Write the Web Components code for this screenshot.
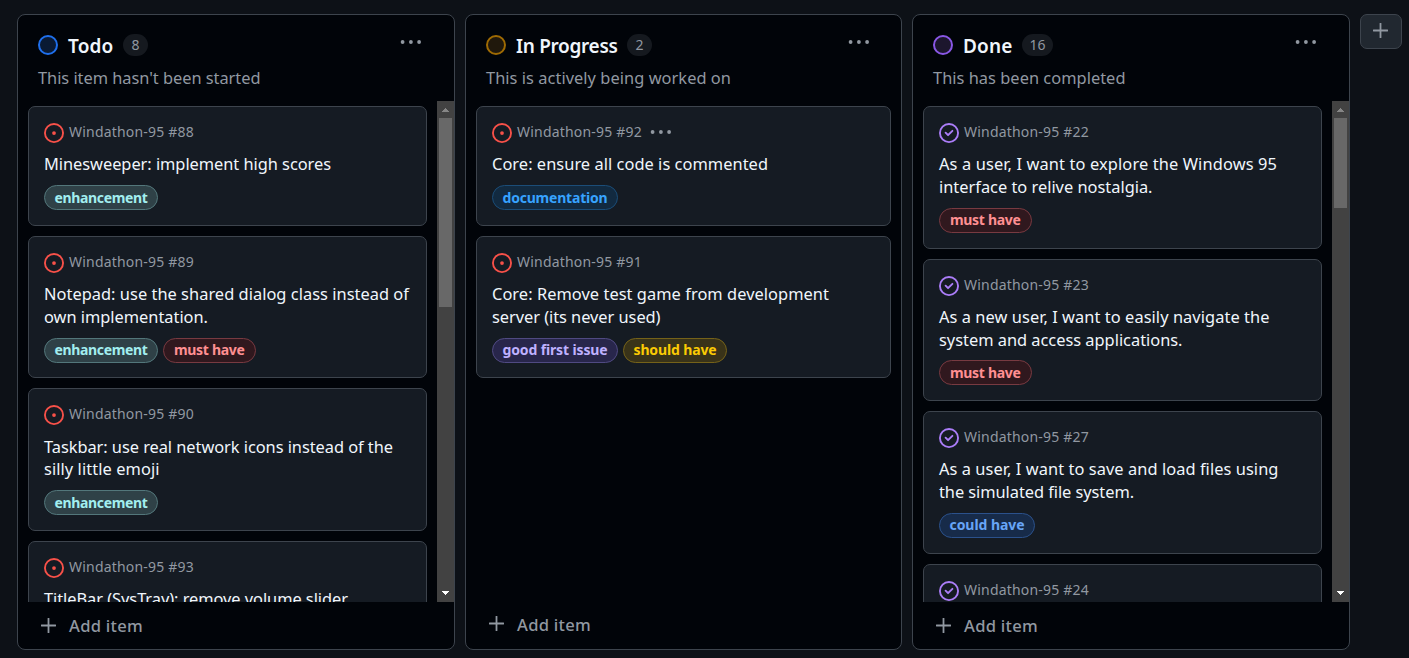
<!DOCTYPE html>
<html lang="en"><head><meta charset="utf-8"><title>Board</title>
<style>html,body{margin:0;height:100%;background:#0d1117;overflow:hidden}</style></head>
<body>
<project-board></project-board>
<script>
const S = 'font-family:"Noto Sans","Open Sans",sans-serif;';
const define = (name, css, html, after) => customElements.define(name, class extends HTMLElement {
  connectedCallback() {
    if (this.shadowRoot) return;
    const r = this.attachShadow({mode: 'open'});
    r.innerHTML = '<style>*{box-sizing:border-box}' + css + '</style>' + (typeof html === 'function' ? html(this) : html);
    if (after) after(this, r);
  }
});

// A single line of text, tracked to occupy the advance given by w.
define('fit-text', ':host{display:block;white-space:pre;width:max-content}span{display:inline-block}', '<span><slot></slot></span>', (el, r) => {
  const w = +el.getAttribute('w');
  const span = r.querySelector('span');
  const now = span.getBoundingClientRect().width, n = el.textContent.length;
  if (w && now) span.style.letterSpacing = ((w - now) / n).toFixed(4) + 'px';
});

define('kebab-dots', ':host{display:block;width:22px;height:4px}svg{display:block}',
  '<svg width="22" height="4"><g fill="#9198a1"><circle cx="2.6" cy="2" r="1.9"/><circle cx="10.9" cy="2" r="1.9"/><circle cx="19.1" cy="2" r="1.9"/></g></svg>');

define('plus-icon', ':host{display:block;width:15px;height:15px}svg{display:block}',
  '<svg width="15" height="15"><path d="M7.5 .5v14M.5 7.5h14" stroke="#9198a1" stroke-width="1.8" stroke-linecap="round"/></svg>');

define('issue-icon', ':host{display:block;width:20px;height:20px}svg{display:block}', el => el.hasAttribute('done')
  ? '<svg width="20" height="20" viewBox="0 0 16 16" fill="#ab7df8"><path d="M11.28 6.78a.75.75 0 0 0-1.06-1.06L7.25 8.69 5.78 7.22a.75.75 0 0 0-1.06 1.06l2 2a.75.75 0 0 0 1.06 0l3.5-3.5Z"/><path d="M16 8A8 8 0 1 1 0 8a8 8 0 0 1 16 0Zm-1.5 0a6.5 6.5 0 1 0-13 0 6.5 6.5 0 0 0 13 0Z"/></svg>'
  : '<svg width="20" height="20" viewBox="0 0 16 16" fill="#f85149"><path d="M8 9.5a1.5 1.5 0 1 0 0-3 1.5 1.5 0 0 0 0 3Z"/><path d="M8 0a8 8 0 1 1 0 16A8 8 0 0 1 8 0ZM1.5 8a6.5 6.5 0 1 0 13 0 6.5 6.5 0 0 0-13 0Z"/></svg>');

const LABELS = {
  'enhancement': ['#a2eeef', '#2f4147', '#53777b', 114, 93],
  'must have': ['#ff8f92', '#30181e', '#783a41', 92.5, 70.5],
  'documentation': ['#37a3ff', '#122a40', '#1b4d78', 126, 105],
  'good first issue': ['#bfb1ff', '#28264b', '#504a82', 126, 105],
  'should have': ['#fbca04', '#393319', '#756219', 104, 83],
  'could have': ['#67a5f7', '#172b49', '#2b518b', 96, 75]
};
define('issue-label', `:host{display:flex;height:25px;border:1px solid;border-radius:13px;justify-content:center;align-items:center;font:700 14px/22px "Noto Sans",sans-serif}`,
  el => { const n = el.getAttribute('name'), l = LABELS[n];
    return `<style>:host{color:${l[0]};background:${l[1]};border-color:${l[2]};width:${l[3]}px}</style><fit-text w="${l[4]}">${n}</fit-text>`; });

define('issue-card', `:host{display:block;flex:none;min-height:119.75px;border:1px solid #3d444d;border-radius:7px;background:#151b23;padding:15px 15px 14.75px;box-sizing:border-box;${S}color:#f0f6fc}
 .ref{display:flex;height:21px;align-items:flex-start;font-size:14px;line-height:20px;color:#9198a1}
 .ref fit-text{margin-left:5px}issue-icon{margin-top:1px}kebab-dots{margin:8px 0 0 8px}
 .title{padding-top:10.25px;font-size:16.4px;line-height:22.75px}
 .labels{display:flex;gap:5px;padding-top:9px}`,
  el => { const c = el.card;
    return `<div class="ref"><issue-icon ${c.done ? 'done' : ''}></issue-icon><fit-text w="125">Windathon-95 #${c.n}</fit-text>${c.menu ? '<kebab-dots></kebab-dots>' : ''}</div>
    <div class="title">${c.t.map(([t, w]) => `<fit-text w="${w}">${t}</fit-text>`).join('')}</div>
    ${c.l.length ? `<div class="labels">${c.l.map(l => `<issue-label name="${l}"></issue-label>`).join('')}</div>` : ''}`; });

define('scroll-bar', ':host{display:flex;flex-direction:column;width:17px;background:#424242}svg{display:block;flex:none}.track{flex:1;padding:0 2px}.thumb{background:#686868}',
  el => `<svg width="17" height="17" shape-rendering="crispEdges"><path d="M5 11h7v-1h-1v-1h-1v-1H9V7H8v1H7v1H6v1H5z" fill="#868686"/></svg><div class="track"><div class="thumb" style="height:${el.getAttribute('thumb')}px"></div></div><svg width="17" height="17" shape-rendering="crispEdges"><path d="M5 6h7v1h-1v1h-1v1H9v1H8V9H7V8H6V7H5z" fill="#fff"/></svg>`);

define('board-column', `:host{display:flex;flex-direction:column;height:636px;border:1px solid #3d444d;border-radius:8px;background:#010409;overflow:hidden;${S}}
 header{height:86px;flex:none;padding:20px 20px 0}
 .top{display:flex;height:20px;align-items:center}
 .dot{width:20px;height:20px;border:2px solid;border-radius:50%}
 h2{margin:2px 0 0 10px;font-size:19px;line-height:24px;font-weight:600;color:#f0f6fc}
 .count{margin-left:9.5px;height:22px;border-radius:11px;background:#15191f;color:#9198a1;font-size:14px;line-height:21px;display:flex;justify-content:center}
 kebab-dots{margin:-7px 12px 0 auto}
 .desc{margin-top:11px;font-size:16.4px;line-height:24px;color:#9198a1}
 .body{display:flex;height:501px;flex:none}
 .cards{flex:1;display:flex;flex-direction:column;gap:10px;padding:5.1px 10px 0;overflow:hidden}
 footer{display:flex;flex:1;padding-left:23px;font-size:16.6px;line-height:24px;color:#9198a1;font-weight:500}
 footer plus-icon{margin:16px 13px 0 0}footer fit-text{margin-top:12px}`,
  el => { const c = el.column;
    return `<style>:host{width:${c.w}px}${c.up ? 'footer plus-icon{margin-top:14px}footer fit-text{margin-top:11px}header kebab-dots{margin-right:11px}' : ''}</style>
    <header><div class="top"><div class="dot" style="border-color:${c.c};background:${c.bg}"></div><h2><fit-text w="${c.nw}">${c.name}</fit-text></h2><div class="count" style="width:${c.cw}px">${c.count}</div><kebab-dots></kebab-dots></div>
    <div class="desc"><fit-text w="${c.dw}">${c.desc}</fit-text></div></header>
    <div class="body"><div class="cards"></div>${c.thumb ? `<scroll-bar thumb="${c.thumb}"></scroll-bar>` : ''}</div>
    <footer><plus-icon></plus-icon><fit-text w="74">Add item</fit-text></footer>`; },
  (el, r) => { for (const card of el.column.cards) { const k = document.createElement('issue-card'); k.card = card; r.querySelector('.cards').append(k); } });

const COLUMNS = [
 {w:438,name:'Todo',nw:45.5,count:8,cw:25,c:'#1f6feb',bg:'#0a1a33',desc:"This item hasn't been started",dw:222.5,thumb:189,cards:[
  {n:88,t:[['Minesweeper: implement high scores',287]],l:['enhancement']},
  {n:89,t:[['Notepad: use the shared dialog class instead of',365],['own implementation.',164]],l:['enhancement','must have']},
  {n:90,t:[['Taskbar: use real network icons instead of the',349],['silly little emoji',115.5]],l:['enhancement']},
  {n:93,t:[['TitleBar (SysTray): remove volume slider',304]],l:[]}]},
 {w:437,name:'In Progress',nw:101.5,count:2,cw:25,c:'#9e6a03',bg:'#20180c',desc:'This is actively being worked on',dw:245,up:true,cards:[
  {n:92,menu:true,t:[['Core: ensure all code is commented',276]],l:['documentation']},
  {n:91,t:[['Core: Remove test game from development',337],['server (its never used)',168.5]],l:['good first issue','should have']}]},
 {w:438,name:'Done',nw:49.5,count:16,cw:31,c:'#8957e5',bg:'#1c162d',desc:'This has been completed',dw:192.5,thumb:90,cards:[
  {n:22,done:true,t:[['As a user, I want to explore the Windows 95',338],['interface to relive nostalgia.',213.5]],l:['must have']},
  {n:23,done:true,t:[['As a new user, I want to easily navigate the',330.5],['system and access applications.',243.5]],l:['must have']},
  {n:27,done:true,t:[['As a user, I want to save and load files using',339.5],['the simulated file system.',195]],l:['could have']},
  {n:24,done:true,t:[],l:[]}]}
];

define('add-column', ':host{display:flex;box-sizing:border-box;width:42px;height:35px;border:1px solid #3d444d;border-radius:7px;background:#212830;justify-content:center;padding:8px 1px 0 0}', '<plus-icon></plus-icon>');
define('project-board', ':host{display:flex;gap:10px;padding:14px 0 0 17px;align-items:flex-start;box-sizing:border-box;height:658px}board-column,add-column{flex:none;box-sizing:border-box}', '', (el, r) => {
  for (const c of COLUMNS) { const k = document.createElement('board-column'); k.column = c; r.append(k); }
  r.append(document.createElement('add-column'));
});
</script>
</body></html>
